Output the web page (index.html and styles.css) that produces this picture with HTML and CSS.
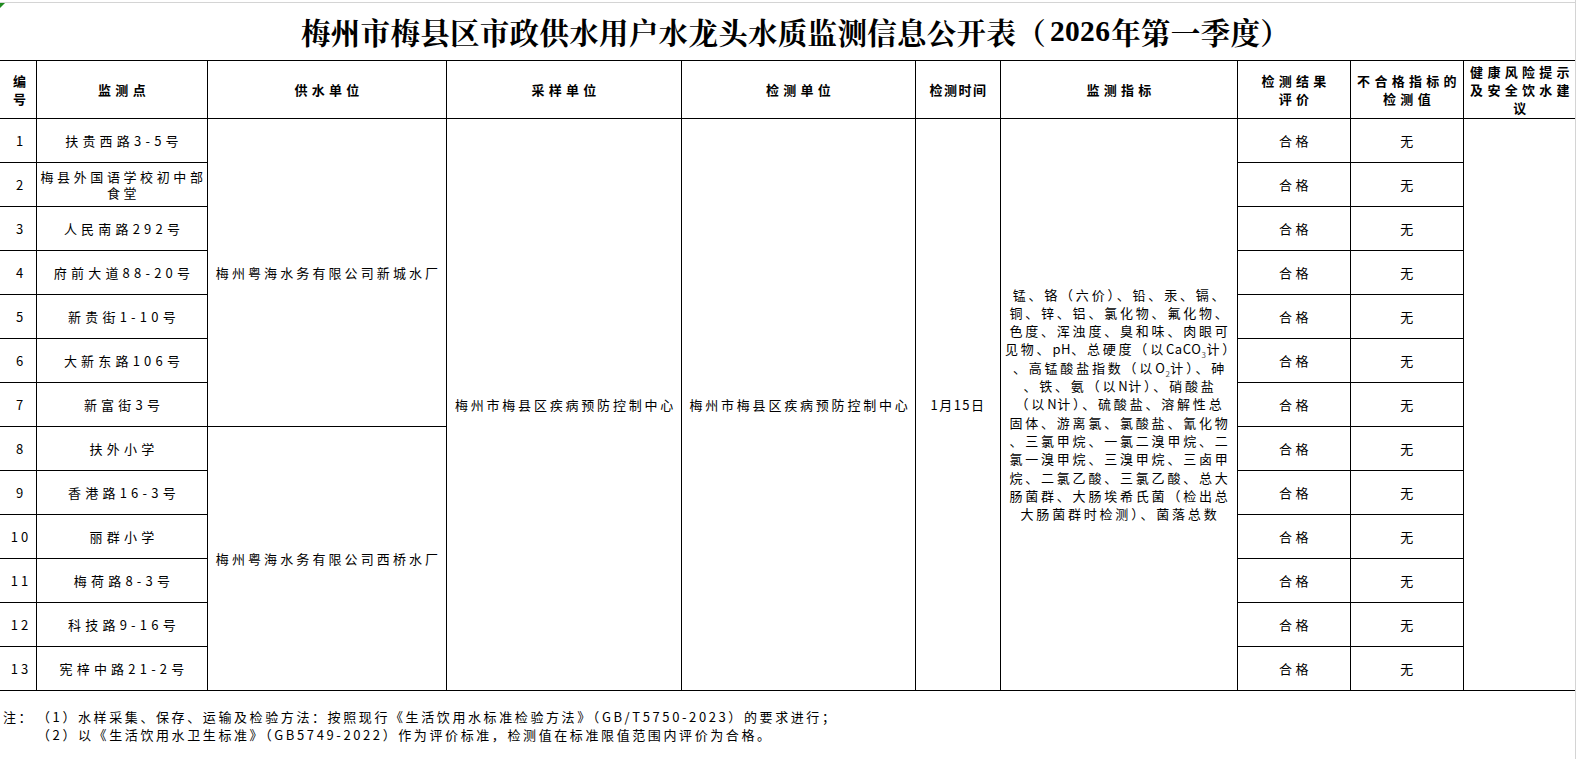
FILE: index.html
```html
<!DOCTYPE html>
<html lang="zh-CN">
<head>
<meta charset="utf-8">
<title>梅州市梅县区市政供水用户水龙头水质监测信息公开表</title>
<link rel="stylesheet" href="styles.css">
</head>
<body>
<div class="sheet">
  <span class="err-mark"></span>
  <div class="grid-top"></div>
  <div class="title">梅州市梅县区市政供水用户水龙头水质监测信息公开表（<span class="num">2026</span>年第一季度）</div>
  <table class="data">
    <colgroup>
      <col class="w-no"><col class="w-point"><col class="w-supply"><col class="w-sample"><col class="w-test"><col class="w-time"><col class="w-ind"><col class="w-res"><col class="w-bad"><col class="w-health">
    </colgroup>
    <thead>
      <tr class="head">
        <th class="h-no">编<br>号</th>
        <th>监测点</th>
        <th>供水单位</th>
        <th>采样单位</th>
        <th>检测单位</th>
        <th class="h-time">检测时间</th>
        <th>监测指标</th>
        <th>检测结果<br>评价</th>
        <th>不合格指标的<br>检测值</th>
        <th>健康风险提示<br>及安全饮水建<br>议</th>
      </tr>
    </thead>
    <tbody>
      <tr>
        <td class="no">1</td>
        <td class="point">扶贵西路3-5号</td>
        <td class="supply" rowspan="7">梅州粤海水务有限公司新城水厂</td>
        <td class="org" rowspan="13">梅州市梅县区疾病预防控制中心</td>
        <td class="org" rowspan="13">梅州市梅县区疾病预防控制中心</td>
        <td class="time" rowspan="13">1月15日</td>
        <td class="ind" rowspan="13">锰、铬（六价）、铅、汞、镉、<br>铜、锌、铝、氯化物、氟化物、<br>色度、浑浊度、臭和味、肉眼可<br>见物、<span class="lat">pH</span>、总硬度（以<span class="lat">CaCO</span><sub>3</sub>计）<br>、高锰酸盐指数（以<span class="lat">O</span><sub>2</sub>计）、砷<br>、铁、氨（以<span class="lat">N</span>计）、硝酸盐<br>（以<span class="lat">N</span>计）、硫酸盐、溶解性总<br>固体、游离氯、氯酸盐、氰化物<br>、三氯甲烷、一氯二溴甲烷、二<br>氯一溴甲烷、三溴甲烷、三卤甲<br>烷、二氯乙酸、三氯乙酸、总大<br>肠菌群、大肠埃希氏菌（检出总<br>大肠菌群时检测）、菌落总数</td>
        <td class="res">合格</td>
        <td class="res">无</td>
        <td class="health" rowspan="13"></td>
      </tr>
      <tr><td class="no">2</td><td class="point two-line">梅县外国语学校初中部<br>食堂</td><td class="res">合格</td><td class="res">无</td></tr>
      <tr><td class="no">3</td><td class="point">人民南路292号</td><td class="res">合格</td><td class="res">无</td></tr>
      <tr><td class="no">4</td><td class="point">府前大道88-20号</td><td class="res">合格</td><td class="res">无</td></tr>
      <tr><td class="no">5</td><td class="point">新贵街1-10号</td><td class="res">合格</td><td class="res">无</td></tr>
      <tr><td class="no">6</td><td class="point">大新东路106号</td><td class="res">合格</td><td class="res">无</td></tr>
      <tr><td class="no">7</td><td class="point">新富街3号</td><td class="res">合格</td><td class="res">无</td></tr>
      <tr>
        <td class="no">8</td>
        <td class="point">扶外小学</td>
        <td class="supply" rowspan="6">梅州粤海水务有限公司西桥水厂</td>
        <td class="res">合格</td><td class="res">无</td>
      </tr>
      <tr><td class="no">9</td><td class="point">香港路16-3号</td><td class="res">合格</td><td class="res">无</td></tr>
      <tr><td class="no">10</td><td class="point">丽群小学</td><td class="res">合格</td><td class="res">无</td></tr>
      <tr><td class="no">11</td><td class="point">梅荷路8-3号</td><td class="res">合格</td><td class="res">无</td></tr>
      <tr><td class="no">12</td><td class="point">科技路9-16号</td><td class="res">合格</td><td class="res">无</td></tr>
      <tr><td class="no">13</td><td class="point">宪梓中路21-2号</td><td class="res">合格</td><td class="res">无</td></tr>
    </tbody>
  </table>
  <div class="notes">
    <div class="note-row"><span class="note-label">注：</span><span class="note-text">（1）水样采集、保存、运输及检验方法：按照现行《生活饮用水标准检验方法》（GB/T5750-2023）的要求进行；</span></div>
    <div class="note-row"><span class="note-label"></span><span class="note-text">（2）以《生活饮用水卫生标准》（GB5749-2022）作为评价标准，检测值在标准限值范围内评价为合格。</span></div>
  </div>
</div>
</body>
</html>
```

FILE: styles.css
```css
html, body {
  margin: 0;
  padding: 0;
  background: #ffffff;
}

body {
  font-family: "Noto Sans CJK SC", "Noto Sans", sans-serif;
  color: #000000;
  overflow: hidden;
}

.sheet {
  position: relative;
  width: 1575px;
  height: 759px;
  border-right: 1px solid #d4d4d4;
  overflow: hidden;
}

.err-mark {
  position: absolute;
  left: 0;
  top: 3px;
  width: 0;
  height: 0;
  border-top: 5px solid #1e8a1e;
  border-right: 5px solid transparent;
}

.grid-top {
  height: 2px;
  border-bottom: 1px solid #d4d4d4;
}

.title {
  height: 57px;
  display: flex;
  align-items: center;
  justify-content: center;
  font-family: "Noto Serif CJK SC", "Noto Sans CJK SC", serif;
  font-weight: 700;
  font-size: 29.5px;
  line-height: 1;
  padding-top: 1px;
  padding-left: 16px;
  letter-spacing: 0.3px;
  box-sizing: border-box;
}

.title .num {
  font-family: "Liberation Serif", serif;
  font-weight: 700;
  margin: 0 1px 0 4px;
}

.data {
  border-collapse: collapse;
  table-layout: fixed;
  width: 1577px;
  margin-left: -1px;
}

.w-no { width: 37px; }
.w-point { width: 171px; }
.w-supply { width: 239px; }
.w-sample { width: 235px; }
.w-test { width: 234px; }
.w-time { width: 85px; }
.w-ind { width: 237px; }
.w-res { width: 113px; }
.w-bad { width: 113px; }
.w-health { width: 113px; }

.data th,
.data td {
  border: 1px solid #000000;
  padding: 0 2px;
  text-align: center;
  vertical-align: middle;
  overflow: hidden;
}

.data .head {
  height: 58px;
}

.data th {
  font-size: 13px;
  font-weight: 700;
  line-height: 18px;
  letter-spacing: 4.3px;
  padding-left: 6px;
}

.data th.h-no {
  letter-spacing: 0;
  padding: 0 0 0 3px;
}

.data th.h-time {
  letter-spacing: 1.5px;
  padding-left: 3px;
}

.data tbody tr {
  height: 44px;
}

.data td {
  font-size: 13px;
  line-height: 15px;
}

.data td.no {
  letter-spacing: 3px;
  padding-left: 8px;
}

.data td.point {
  letter-spacing: 4.2px;
  padding-left: 4px;
  padding-right: 0;
  white-space: nowrap;
}

.data td.point.two-line {
  letter-spacing: 3.6px;
  padding-left: 3px;
  line-height: 16px;
}

.data td.supply {
  letter-spacing: 3.1px;
  padding-left: 5px;
}

.data td.org {
  letter-spacing: 2.8px;
  padding-left: 5px;
}

.data td.time {
  letter-spacing: 1.5px;
}

.data td.ind {
  letter-spacing: 2.8px;
  line-height: 18.3px;
  white-space: nowrap;
  padding-left: 4px;
}

.data td.ind .lat {
  letter-spacing: 0.6px;
}

.data td.ind sub {
  font-size: 8px;
  line-height: 0;
  letter-spacing: 0.5px;
  color: #555555;
}

.data td.res {
  letter-spacing: 3.5px;
  padding-left: 5px;
}

.notes {
  margin-top: 17px;
  font-size: 13px;
  line-height: 18.3px;
  letter-spacing: 2.6px;
}

.note-row {
  display: flex;
  white-space: nowrap;
}

.note-label {
  width: 37px;
  padding-left: 3px;
  box-sizing: border-box;
  flex: none;
}
```
